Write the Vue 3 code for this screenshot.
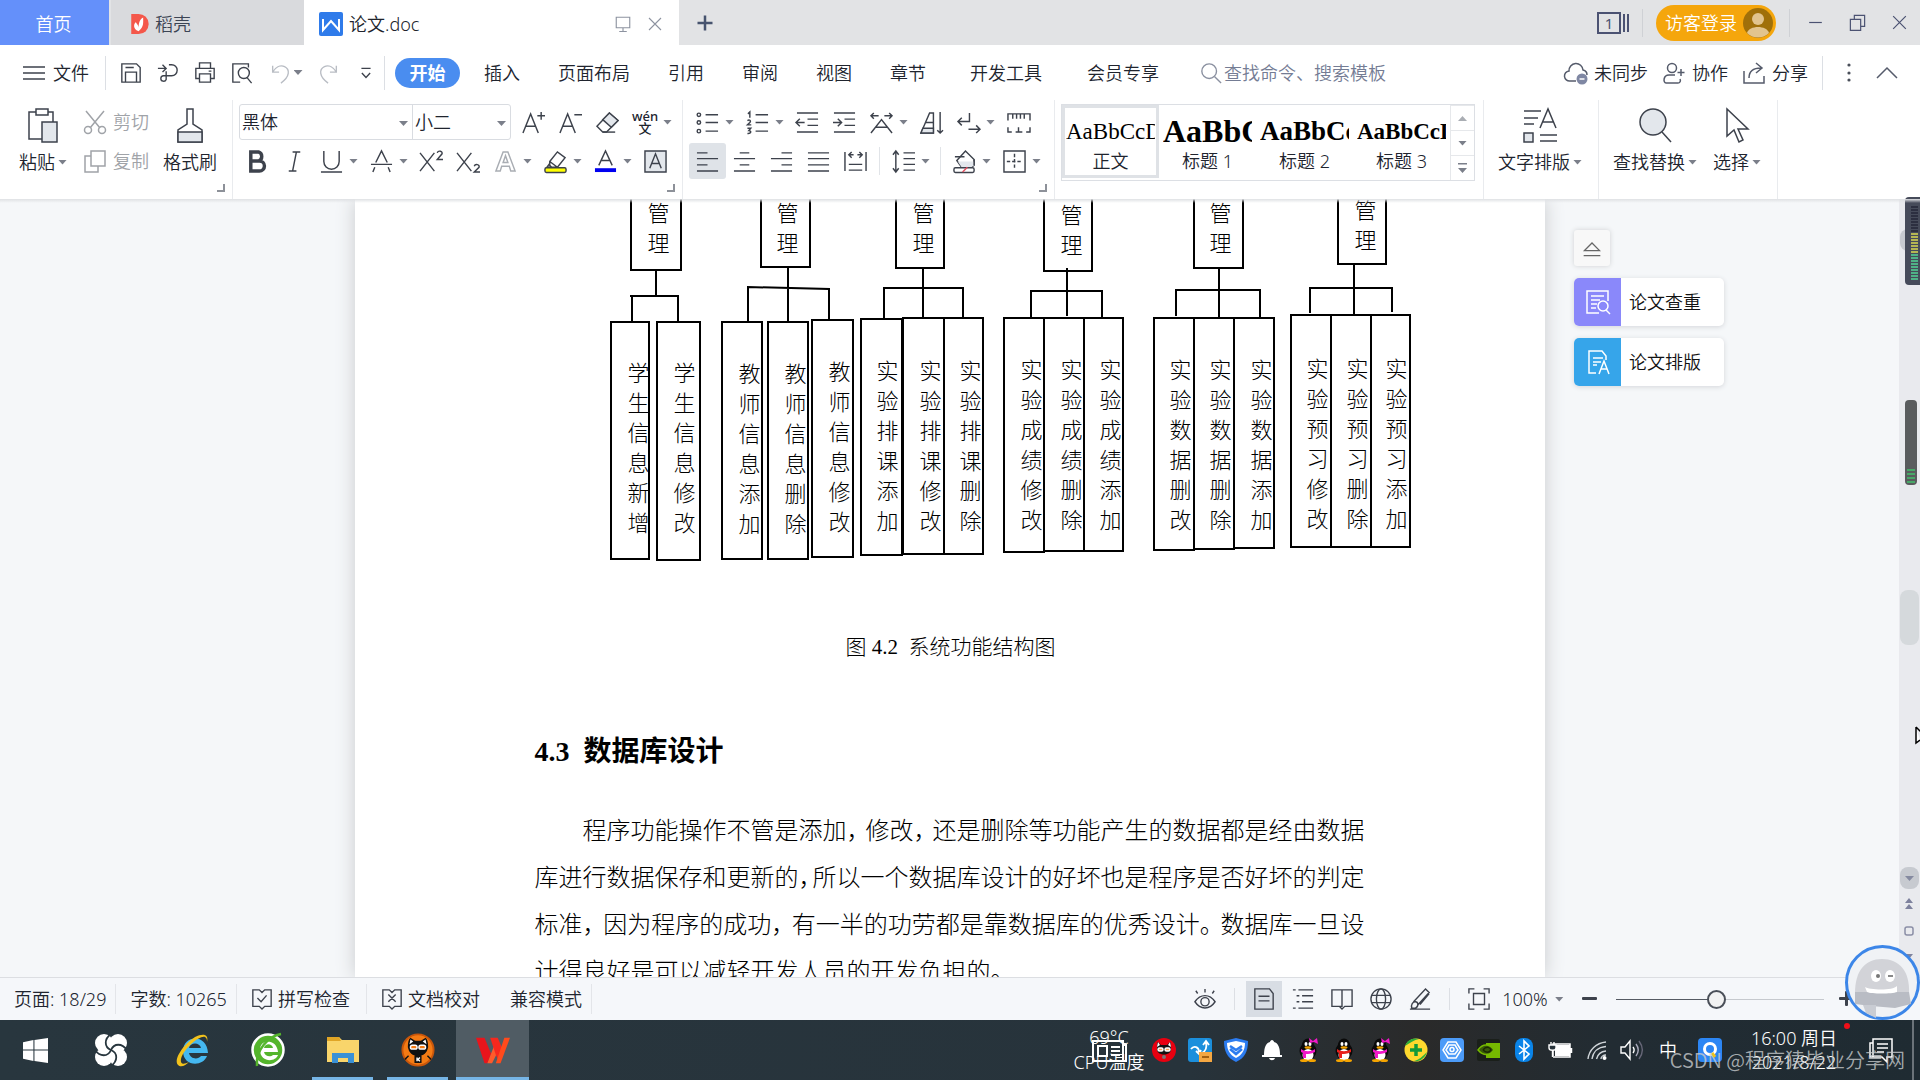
<script setup>
const icons = {
  menu: '<path d="M1 6h22M1 12h22M1 18h22"/>',
  save: '<path d="M2 2h16l4 4v16H2zM6 22V11h12v11M6 6h9"/>',
  exportPdf: '<path d="M1 7h9M6 3l4 4-4 4M13 3h3a6 6 0 0 1 0 12H7a3 3 0 1 0 3 4V10"/>',
  print: '<path d="M6 7V1h12v6M6 18H2V7h20v11h-4M6 13h12v9H6zM16 10h3"/>',
  preview: '<path d="M10 22H2V2h17v4"/><circle cx="14" cy="12" r="6"/><path d="M17.500 17l5 6"/>',
  undo: '<path d="M4 4v7h7M4 11c3-5 8-8 13-6 6 3 6 11-4 18"/>',
  redo: '<path d="M20 4v7h-7M20 11c-3-5-8-8-13-6-6 3-6 11 4 18"/>',
  more: '<path d="M7 7h10M7.500 12l4.500 5 4.500-5"/>',
  search: '<circle cx="10" cy="10" r="8"/><path d="M16 16l7 7"/>',
  cloud: '<path d="M12 20H6a5 5 0 0 1-1-10 7 7 0 0 1 14-1 5 5 0 0 1 4 5"/><circle cx="18" cy="18" r="5.500" fill="#7f87a3" stroke="none"/><path d="M15.500 18h5" stroke="#fff"/>',
  people: '<circle cx="10" cy="7" r="4.500"/><path d="M13 14H7c-6 0-6 8-3 8h12c2 0 3-2 2-4M19 8v7M15.500 11.500h7"/>',
  share: '<path d="M2 10v12h20v-7M7 17c0-7 4-10 12-10M14 2l6 5-6 5"/>',
  up: '<path d="M2 17l10-10 10 10"/>',
  dots: '<g fill="#4a4f5a" stroke="none"><circle cx="12" cy="4" r="1.600"/><circle cx="12" cy="12" r="1.600"/><circle cx="12" cy="19" r="1.600"/></g>',
  present: '<path d="M3 3h18v14H3zM12 17v5M7 22h10"/>',
  close: '<path d="M4 4l16 16M20 4L4 20"/>',
  min: '<path d="M4 12h16"/>',
  restore: '<path d="M3 8h13v14H3zM8 8V3h13v14h-5"/>',
  plus: '<path d="M12 3v18M3 12h18" stroke-width="3"/>',
  paste: '<path d="M11 4H4v27h13M23 4h5v10M11 1h12v6H11z"/><path d="M17 14h15v20H17z" fill="#e3e7ec"/>',
  brush: '<path d="M15 1h6v15l9 6v12H6V22l9-6z"/><path d="M6 24h24v10H6z" fill="#e3e7ec"/>',
  cut: '<path d="M3 1l14 17M21 1L7 18"/><circle cx="5" cy="20" r="3.500"/><circle cx="19" cy="20" r="3.500"/>',
  copy: '<path d="M8 2h14v15H8zM8 7H2v16h13v-6"/>',
  fontUp: '<path d="M1 23L9 3l8 20M4 16h10M20 1v8M16 5h8"/>',
  fontDown: '<path d="M1 23L9 3l8 20M4 16h10M16 4h8"/>',
  eraser: '<path d="M14 2l9 8-12 12H7l-6-6z"/><path d="M14 2l9 8-7 7-9-8z" fill="#e3e7ec"/><path d="M7 22h13"/>',
  bold: '<path d="M5 2h8a5 5 0 0 1 0 9.500H5zM5 11.500h9a5.200 5.200 0 0 1 0 10.500H5z" stroke-width="3.600"/>',
  italic: '<path d="M10 2h8M6 22h8M14 2l-4 20"/>',
  underline: '<path d="M4 1v11a8 8 0 0 0 16 0V1M1 23h22"/>',
  strike: '<path d="M6 13L12 1l6 12M1 15h22M5 18l-2 5M19 18l2 5"/>',
  sup: '<path d="M0 3l15 19M15 3L0 22M18 3c1-3 6-2 5 1l-5 6h6"/>',
  sub: '<path d="M0 3l15 19M15 3L0 22M18 17c1-3 6-2 5 1l-5 5h6"/>',
  outline: '<path d="M2 22L9.500 2h5L22 22h-4.500L16 17H8l-1.500 5zM9.500 13h5L12 6z"/>',
  highlight: '<path d="M6 12l8-10 8 6-8 10H8l-2-2zM6 12l8 6M6 14l-3 4h5"/><rect x="1" y="18.500" width="22" height="5" rx="1.500" fill="#ffff00"/>',
  fontColor: '<path d="M5 16L12 1l7 15M8 11h8"/><path d="M1 21h22" stroke="#0000f0" stroke-width="4"/>',
  charBox: '<path d="M1 1h22v22H1z" fill="#e3e7ec"/><path d="M6 19L12 4l6 15M8 14h8"/>',
  bullets: '<circle cx="3" cy="4" r="1.800"/><circle cx="3" cy="12" r="1.800"/><circle cx="3" cy="21" r="1.800"/><path d="M10 4h13M10 12h13M10 21h13"/>',
  numbers: '<path d="M10 4h13M10 12h13M10 21h13M2 3l2-2v6M1.500 10c2-1.500 4 0 2.500 2l-2.500 2.500h4M1.500 18h3.500l-2 2.500c3 0 2.500 3.500-1.500 3"/>',
  outdent: '<path d="M1 2h22M12 8.500h11M12 15h11M1 22h22M0 12h9M4 8l-4 4 4 4"/>',
  indent: '<path d="M1 2h22M12 8.500h11M12 15h11M1 22h22M0 12h9M5 8l4 4-4 4"/>',
  charScale: '<path d="M1 23L12 9l11 14M6 17h12M1 5h8M4 2L1 5l3 3M15 5h8M20 2l3 3-3 3"/>',
  sort: '<path d="M1 23L10 2h4v21z"/><path d="M3 18h11v5H1z" fill="#e3e7ec"/><path d="M6 12h8M21 1v22M18 20l3 3 3-3"/>',
  wrap: '<path d="M13 2v9H2M5 7l-4 4 4 4M12 19h11M20 15l4 4-4 4"/>',
  ruler: '<path d="M1 10V3h23v7M6 3v5M10 3v5M14 3v5M18 3v5M1 17v5h4M24 17v5h-4M9 22h7M12 17v5"/>',
  left: '<path d="M1 3h11M1 9h22M1 15.500h11M1 22h22"/>',
  center: '<path d="M7 3h10M1 9h22M7 15.500h10M1 22h22"/>',
  right: '<path d="M12 3h11M1 9h22M12 15.500h11M1 22h22"/>',
  justify: '<path d="M1 3h22M1 9h22M1 15.500h22M1 22h22"/>',
  distribute: '<path d="M1 2v20M23 2v20M5 15h14M5 21h14M5 5h5M14 5h5M8 2L5 5l3 3M16 2l3 3-3 3"/>',
  spacing: '<path d="M4 1v22M1 5l3-4 3 4M1 19l3 4 3-4M12 3h12M12 9h12M12 15h12M12 21h12"/>',
  fill: '<path d="M4 11l9-10 9 9v6l-3 2H9z"/><path d="M5 12h17v4l-3 2H9z" fill="#e3e7ec" stroke="none"/><path d="M2 7h10M22 10v6"/><rect x="1" y="18.500" width="21" height="5" rx="1.500" fill="#fff"/><path d="M10 23l5-5" stroke="#e05060"/>',
  borders: '<path d="M1 1h22v22H1z"/><path d="M12 4v16M4 12h16" stroke-dasharray="3.500 2"/>',
  typeset: '<path d="M2 3h17M2 10h14M2 16h10M18 33h17M18 27h17M18 20L26 1l8 19M21 14h10"/><path d="M2 25h9v9H2z" fill="#e3e7ec"/>',
  find: '<circle cx="16" cy="14" r="13" fill="#e3e7ec"/><path d="M25 24l9 10"/>',
  select: '<path d="M8 1v27l7-6 5 12 4-2-5-11h10z"/>',
  spell: '<path d="M2 2h7l3 3 3-3h7v18h-7l-3 3-3-3H2zM7 11l4 4 6-7"/>',
  proof: '<path d="M2 2h7l3 3 3-3h7v18h-7l-3 3-3-3H2zM8 7l8 8M16 7l-8 8"/>',
  eye: '<path d="M1 15c6-9 16-9 22 0-6 9-16 9-22 0z"/><circle cx="12" cy="15" r="4.500"/><path d="M12 1v4M2 3l2 3M22 3l-2 3"/>',
  page: '<path d="M2 1h16l4 5v17H2zM6 9h12M6 14h12"/>',
  outlineView: '<path d="M1 2h3M7 2h16M5 8.500h3M11 8.500h12M5 15h3M11 15h12M1 22h3M7 22h16" />',
  book: '<path d="M1 2h11v18H1zM12 2h11v18h-8l-3 3-3-3"/>',
  globe: '<circle cx="12" cy="12" r="11"/><ellipse cx="12" cy="12" rx="5" ry="11"/><path d="M2 8h20M2 16h20"/>',
  pen: '<path d="M1 23h22M5 15L18 1l4 4-13 14M3 22c-1-4 1-7 4-7s4 5 0 7zM12 18l10-12"/>',
  fit: '<path d="M1 6V1h6M17 1h6v5M23 17v6h-6M7 23H1v-6M6 6h12v12H6z"/>',
  checkDup: '<path d="M13 23H1V1h21v10M5 6h13M5 10h9M5 14h6M5 18h5"/><circle cx="17" cy="16" r="5"/><path d="M20 20l4 4"/>',
  layout: '<path d="M10 23H3V1h13l4 5v4M7 8h10M7 12h8M7 15h4M13 24l5-13 5 13M15 19h6"/>',
  eject: '<path d="M3 15l9-9 9 9zM2 21h20"/>',
}

const tabs = ['插入', '页面布局', '引用', '审阅', '视图', '章节']
const wideTabs = ['开发工具', '会员专享']

const fontRow1 = [['fontUp', 0], ['fontDown', 0], ['eraser', 0]]
const fontRow2 = [['bold', 0], ['italic', 0], ['underline', 1], ['strike', 1], ['sup', 0], ['sub', 0], ['outline', 1], ['highlight', 1], ['fontColor', 1], ['charBox', 0]]
const paraRow1 = [['bullets', 1], ['numbers', 1], ['outdent', 0], ['indent', 0], ['charScale', 1], ['sort', 0], ['wrap', 1], ['ruler', 0]]
const paraRow2 = [['left', 0], ['center', 0], ['right', 0], ['justify', 0], ['distribute', 0], ['sep', 0], ['spacing', 1], ['sep', 0], ['fill', 1], ['borders', 1]]

const styles = [
  { sample: 'AaBbCcDd', label: '正文', cls: 'body' },
  { sample: 'AaBbCc', label: '标题 1', cls: 'h1' },
  { sample: 'AaBbCc', label: '标题 2', cls: 'h2' },
  { sample: 'AaBbCcDd', label: '标题 3', cls: 'h3' },
]

// Diagram nodes: text, left, top, right, bottom, text centre x, first character centre y
const nodes = [
  ['管理', 275, -40, 327, 72, 303, 15],
  ['管理', 405, -40, 456, 69, 432, 15],
  ['管理', 540, -40, 590, 70, 568, 15],
  ['管理', 688, -40, 738, 73, 716, 17],
  ['管理', 838, -40, 889, 70, 865, 15],
  ['管理', 982, -40, 1032, 66, 1010, 12],
  ['学生信息新增', 255, 122, 295, 361, 283, 175],
  ['学生信息修改', 301, 122, 346, 362, 329, 175],
  ['教师信息添加', 366, 122, 408, 361, 394, 176],
  ['教师信息删除', 412, 122, 454, 361, 440, 176],
  ['教师信息修改', 456, 120, 499, 359, 484, 174],
  ['实验排课添加', 505, 119, 548, 357, 532, 173],
  ['实验排课修改', 547, 118, 590, 356, 575, 173],
  ['实验排课删除', 588, 118, 629, 356, 615, 173],
  ['实验成绩修改', 648, 118, 690, 354, 676, 172],
  ['实验成绩删除', 688, 118, 730, 353, 716, 172],
  ['实验成绩添加', 728, 118, 769, 353, 755, 172],
  ['实验数据删改', 798, 118, 840, 352, 825, 172],
  ['实验数据删除', 838, 118, 880, 351, 865, 172],
  ['实验数据添加', 878, 118, 920, 350, 906, 172],
  ['实验预习修改', 935, 115, 977, 349, 962, 171],
  ['实验预习删除', 975, 115, 1017, 349, 1002, 171],
  ['实验预习添加', 1015, 115, 1056, 349, 1041, 171],
].map(([text, l, t, r, b, cx, cy]) => ({
  text,
  style: {
    left: l + 'px',
    top: t + 'px',
    width: r - l + 'px',
    height: b - t + 'px',
    paddingLeft: cx - 12 - l + 'px',
    paddingTop: cy - 17 - t + 'px',
  },
}))

const links = [
  'M301 72V97M275 97H324M277 97V122M323 97V122',
  'M433 69V122M393 122V88L474 90V120',
  'M568 70V118M529 119V89H608V118',
  'M712 69V117M676 118V92H747V118',
  'M864 70V118M821 117V91H905V118',
  'M999 66V115M955 114V89H1037V113',
]

const paragraph = [
  ['程序功能操作不管是添加，', '修改，', '还是删除等功能产生的数据都是经由数据'],
  ['库进行数据保存和更新的，', '所以一个数据库设计的好坏也是程序是否好坏的判定'],
  ['标准，', '因为程序的成功，', '有一半的功劳都是靠数据库的优秀设计。', '数据库一旦设'],
  ['计得良好是可以减轻开发人员的开发负担的。'],
]

const cat = '<path d="M5 12c0-3 0-8 1-8l3 3h6l3-3c1 0 1 5 1 8-1 6-13 6-14 0z" fill="#111"/><path d="M6 4l-1 5 3-2zM18 4l1 5-3-2z" fill="#fff"/><rect x="6" y="10" width="5" height="3" rx="1.500" fill="#f7a35c" stroke="#fff"/><rect x="13" y="10" width="5" height="3" rx="1.500" fill="#f7a35c" stroke="#fff"/>'
const penguin = (scarf, bow) =>
  '<ellipse cx="12" cy="13" rx="8.500" ry="9" fill="#0a0a0a"/><ellipse cx="12" cy="7" rx="6" ry="6.500" fill="#0a0a0a"/><ellipse cx="12" cy="17" rx="5.500" ry="6" fill="#fff"/><ellipse cx="10" cy="6" rx="1.500" ry="2" fill="#fff"/><ellipse cx="14" cy="6" rx="1.500" ry="2" fill="#fff"/><ellipse cx="12" cy="9.500" rx="3.500" ry="1.300" fill="#f5a400"/>' +
  `<path d="M5 11c4 3 10 3 14 0v3c-4 2-7 2-9 2v4H7v-5l-2-1z" fill="${scarf}"/><ellipse cx="8" cy="22.500" rx="4" ry="1.500" fill="#f5a400"/><ellipse cx="16" cy="22.500" rx="4" ry="1.500" fill="#f5a400"/>` +
  (bow ? `<path d="M13 0l4 3 4-3 1 6-4-2-4 1z" fill="${scarf}"/>` : '')

const tray = [
  '<circle cx="12" cy="12" r="12" fill="#e80010"/>' + cat + '<circle cx="12" cy="19" r="2" fill="#777"/>',
  '<rect width="24" height="24" rx="3" fill="#1b8fdc"/><path d="M3 11c3-4 8-2 8 3M8 13l3 3 2-4M14 15c4-2 5-6 4-11M15 7l3-4 3 4" fill="none" stroke="#fff" stroke-width="1.800"/><rect x="11" y="14" width="13" height="10" fill="#f4a742"/><path d="M14 19h7" stroke="#8a4a00" stroke-width="1.500"/>',
  '<path d="M12 0l12 3c0 10-3 17-12 21C3 20 0 13 0 3z" fill="#2c7cf0"/><path d="M12 3l9 2c0 7-3 12-9 15C6 17 3 12 3 5z" fill="#fff"/><path d="M6 8l6 4 6-4M6 11l6 5 6-5" fill="none" stroke="#2c7cf0" stroke-width="2.500"/>',
  '<path d="M12 2c1 0 2 1 2 2 4 1 6 5 6 13h2v2H2v-2h2C4 9 6 5 10 4c0-1 1-2 2-2zM9 20h6c-1 3-5 3-6 0z" fill="#fff"/>',
  penguin('#f018c8', true),
  penguin('#e8201c', false),
  penguin('#f018c8', true),
  '<circle cx="12" cy="12" r="11.500" fill="#ffd92e"/><path d="M1 8C3 2 9-1 15 1c-5 1-9 4-14 7zM23 14c-2 6-7 10-13 9 5-1 9-5 13-9z" fill="#2dae3a"/><path d="M12 6v12M6 12h12" stroke="#14993a" stroke-width="3.500"/>',
  '<rect width="24" height="24" rx="4" fill="#4c9bf8"/><path d="M8 4h8l5 8-5 8H8l-5-8z" fill="none" stroke="#fff" stroke-width="1.500"/><path d="M9 7h6l3 5-3 4H9l-3-4z" fill="none" stroke="#fff"/><circle cx="12" cy="11.500" r="2" fill="none" stroke="#fff" stroke-width="1.500"/>',
  '<rect x="1" y="1" width="23" height="22" rx="2" fill="#1a1f1a"/><path d="M10 5h14v15H10z" fill="#76b900"/><path d="M2 12c5-7 12-6 16 0-4 6-11 6-16 0z" fill="#3a5a0a" stroke="#76b900" stroke-width="1.500"/><path d="M7 12c3-4 7-3 8 0-2 3-5 3-8 0" fill="none" stroke="#1a2a00" stroke-width="1.500"/>',
  '<rect x="3" width="18" height="24" rx="8" fill="#0a84e8"/><path d="M7 8l10 8-5 5V3l5 5-10 8" fill="none" stroke="#fff" stroke-width="1.600"/>',
  '<rect x="7" y="7" width="15" height="11" fill="#fff"/><path d="M5 18V6h17v13H5M23.500 10v5" fill="none" stroke="#fff"/><path d="M1 7h7v3c0 3-7 3-7 0zM3 4v3M6 4v3M4.500 12v7" fill="#27323a" stroke="#fff" stroke-width="1.400"/>',
  '<g fill="none" stroke="#cfd4d8" stroke-width="1.400"><path d="M4 21C5 12 12 5 22 4"/><path d="M8 21c1-7 6-12 14-12.500"/><path d="M12.500 21c1-4 4-7.500 9.500-8"/><path d="M17 21c0-2 2-4 5-4"/></g><circle cx="20.500" cy="20" r="2" fill="#fff"/>',
  '<g fill="none" stroke="#fff" stroke-width="1.400"><path d="M1 9h4l5-6v18l-5-6H1z"/><path d="M13 9c1.500 2 1.500 4 0 6"/><path d="M16 6c3 4 3 8 0 12" stroke="#aab"/><path d="M19 3c4.500 6 4.500 12 0 18" stroke="#667"/></g>',
]
const meter = Array.from({ length: 25 }, (_, i) => (i < 9 ? 'off' : i < 16 ? 'warm' : 'cool'))
</script>

<template>
  <div class="app">
    <header class="titlebar">
      <button class="home">首页</button>
      <button class="tab docer">
        <svg class="logo" viewBox="0 0 20 24"><path d="M1 1h8a11 11 0 0 1 0 22H1z" fill="#f4574a" /><path d="M9 20c-7-3-5-9-3-10 1 2 3 3 3 6 0-4 1-9 5-11 0 6 1 10-5 15z" fill="#fff" /></svg>
        稻壳
      </button>
      <div class="tab active">
        <svg class="logo big" viewBox="0 0 24 24"><rect width="24" height="24" rx="2" fill="#2f7bea" /><path d="M4 7v11l8-9 8 9V7" fill="none" stroke="#fff" stroke-width="2" /></svg>
        <span>论文.doc</span>
        <button class="ib pale push" aria-label="投影"><svg viewBox="0 0 24 24" v-html="icons.present" /></button>
        <button class="ib pale" aria-label="关闭标签"><svg viewBox="0 0 24 24" v-html="icons.close" /></button>
      </div>
      <button class="ib add" aria-label="新建"><svg viewBox="0 0 24 24" v-html="icons.plus" /></button>
      <div class="window">
        <button class="count" aria-label="窗口"><b>1</b><i></i><i></i></button>
        <span class="rule"></span>
        <button class="login">访客登录
          <svg viewBox="0 0 30 30"><circle cx="15" cy="15" r="15" fill="#a0700a" /><circle cx="15" cy="11" r="6" fill="#e2c48e" /><path d="M4 25c2-8 20-8 22 0-6 6-16 6-22 0z" fill="#e2c48e" /></svg>
        </button>
        <span class="rule"></span>
        <button class="ib" aria-label="最小化"><svg viewBox="0 0 24 24" v-html="icons.min" /></button>
        <button class="ib" aria-label="还原"><svg viewBox="0 0 24 24" v-html="icons.restore" /></button>
        <button class="ib" aria-label="关闭"><svg viewBox="0 0 24 24" v-html="icons.close" /></button>
      </div>
    </header>

    <nav class="menubar">
      <button class="file"><svg viewBox="0 0 24 24" v-html="icons.menu" />文件</button>
      <span class="rule"></span>
      <div class="quick">
        <button v-for="n in ['save', 'exportPdf', 'print', 'preview']" :key="n" class="ib" :aria-label="n"><svg viewBox="0 0 24 24" v-html="icons[n]" /></button>
        <button class="ib faded drop" aria-label="撤销"><svg viewBox="0 0 24 24" v-html="icons.undo" /><i class="caret"></i></button>
        <button class="ib faded" aria-label="恢复"><svg viewBox="0 0 24 24" v-html="icons.redo" /></button>
        <button class="ib" aria-label="更多"><svg viewBox="0 0 24 24" v-html="icons.more" /></button>
      </div>
      <span class="rule"></span>
      <button class="start">开始</button>
      <div class="tabs">
        <button v-for="t in tabs" :key="t">{{ t }}</button>
        <button v-for="t in wideTabs" :key="t" class="wide">{{ t }}</button>
      </div>
      <label class="search"><svg viewBox="0 0 24 24" v-html="icons.search" /><input type="text" placeholder="查找命令、搜索模板" aria-label="查找命令、搜索模板" /></label>
      <div class="account">
        <button><svg viewBox="0 0 24 24" v-html="icons.cloud" />未同步</button>
        <button><svg viewBox="0 0 24 24" v-html="icons.people" />协作</button>
        <button><svg viewBox="0 0 24 24" v-html="icons.share" />分享</button>
        <span class="rule"></span>
        <button aria-label="更多"><svg viewBox="0 0 24 24" v-html="icons.dots" /></button>
        <button aria-label="折叠"><svg viewBox="0 0 24 24" v-html="icons.up" /></button>
      </div>
    </nav>

    <section class="ribbon">
      <div class="group clip">
        <button class="large"><svg viewBox="0 0 36 36" v-html="icons.paste" /><span>粘贴<i class="caret"></i></span></button>
        <div class="pair">
          <button><svg viewBox="0 0 24 24" v-html="icons.cut" />剪切</button>
          <button><svg viewBox="0 0 24 24" v-html="icons.copy" />复制</button>
        </div>
        <button class="large"><svg viewBox="0 0 36 36" v-html="icons.brush" /><span>格式刷</span></button>
        <i class="corner"></i>
      </div>
      <div class="group font">
        <div class="row">
          <div class="selects">
            <label class="pick family"><select aria-label="字体"><option>黑体</option></select><i class="caret"></i></label>
            <label class="pick size"><select aria-label="字号"><option>小二</option></select><i class="caret"></i></label>
          </div>
          <button v-for="[n] in fontRow1" :key="n" class="tool" :aria-label="n"><svg viewBox="0 0 24 24" v-html="icons[n]" /></button>
          <button class="tool drop"><span class="pinyin"><span>wén</span><span>文</span></span><i class="caret"></i></button>
        </div>
        <div class="row">
          <button v-for="[n, d] in fontRow2" :key="n" class="tool" :class="{ drop: d, faint: n === 'outline' }" :aria-label="n"><svg viewBox="0 0 24 24" v-html="icons[n]" /><i v-if="d" class="caret"></i></button>
        </div>
        <i class="corner"></i>
      </div>
      <div class="group para">
        <div class="row">
          <button v-for="[n, d] in paraRow1" :key="n" class="tool" :class="{ drop: d }" :aria-label="n"><svg viewBox="0 0 24 24" v-html="icons[n]" /><i v-if="d" class="caret"></i></button>
        </div>
        <div class="row">
          <template v-for="([n, d], i) in paraRow2" :key="i">
            <span v-if="n === 'sep'" class="sep"></span>
            <button v-else class="tool" :class="{ drop: d, on: n === 'left' }" :aria-label="n"><svg viewBox="0 0 24 24" v-html="icons[n]" /><i v-if="d" class="caret"></i></button>
          </template>
        </div>
        <i class="corner"></i>
      </div>
      <div class="group gallery-group">
        <div class="gallery">
          <button v-for="s in styles" :key="s.label" class="style" :class="s.cls"><span class="sample">{{ s.sample }}</span><span>{{ s.label }}</span></button>
          <div class="scroller">
            <button aria-label="上一行"><i class="caret flip"></i></button>
            <button aria-label="下一行"><i class="caret"></i></button>
            <button aria-label="展开"><i class="caret bar"></i></button>
          </div>
        </div>
      </div>
      <div class="group actions">
        <button class="large"><svg viewBox="0 0 36 36" v-html="icons.typeset" /><span>文字排版<i class="caret"></i></span></button>
      </div>
      <div class="group actions">
        <button class="large"><svg viewBox="0 0 36 36" v-html="icons.find" /><span>查找替换<i class="caret"></i></span></button>
        <button class="large"><svg viewBox="0 0 36 36" v-html="icons.select" /><span>选择<i class="caret"></i></span></button>
      </div>
    </section>

    <main class="workspace">
      <div class="canvas">
        <article class="page">
          <figure>
            <div class="diagram">
              <svg class="links" viewBox="0 0 1190 400"><path v-for="d in links" :key="d" :d="d" /></svg>
              <div v-for="(n, i) in nodes" :key="i" class="node" :style="n.style"><span>{{ n.text }}</span></div>
            </div>
            <figcaption>图 4.2&nbsp; 系统功能结构图</figcaption>
          </figure>
          <h2>4.3&nbsp; 数据库设计</h2>
          <p><span v-for="(line, i) in paragraph" :key="i" class="line"><span v-for="part in line" :key="part">{{ part }}</span></span></p>
        </article>
      </div>
      <aside class="side">
        <button class="fold" aria-label="收起"><svg viewBox="0 0 24 24" v-html="icons.eject" /></button>
        <button class="card"><span class="badge violet"><svg viewBox="0 0 24 24" v-html="icons.checkDup" /></span>论文查重</button>
        <button class="card"><span class="badge sky"><svg viewBox="0 0 24 24" v-html="icons.layout" /></span>论文排版</button>
      </aside>
      <div class="scrollbar">
        <i class="cap top"></i>
        <i class="thumb"></i>
        <i class="cap down"></i>
        <svg class="browse" viewBox="0 0 20 66"><path d="M6 10l4-5 4 5zM6 16l4-5 4 5zM6 61h8l-4 5z" fill="#7e829e" /><rect x="6" y="34" width="8" height="8" rx="2" fill="none" stroke="#8a8ea6" stroke-width="1.500" /></svg>
      </div>
      <div class="meter small"><i v-for="i in 4" :key="i" class="green"></i></div>
      <svg class="pointer" viewBox="0 0 5 18"><path d="M1 1v16l4-3M1 1l5 5" fill="#fff" stroke="#000" stroke-width="1.500" /></svg>
    </main>
    <div class="meter"><i v-for="(m, i) in meter" :key="i" :class="m"></i></div>

    <footer class="status">
      <span class="cell">页面: 18/29</span>
      <span class="cell">字数: 10265</span>
      <button class="cell"><svg viewBox="0 0 24 24" v-html="icons.spell" />拼写检查</button>
      <button class="cell noline"><svg viewBox="0 0 24 24" v-html="icons.proof" />文档校对</button>
      <span class="cell mode">兼容模式</span>
      <div class="views">
        <button aria-label="护眼"><svg viewBox="0 0 24 24" v-html="icons.eye" /></button>
        <span class="rule"></span>
        <button v-for="n in ['page', 'outlineView', 'book', 'globe', 'pen']" :key="n" :class="{ on: n === 'page' }" :aria-label="n"><svg viewBox="0 0 24 24" v-html="icons[n]" /></button>
        <span class="rule"></span>
        <button aria-label="适应窗口"><svg viewBox="0 0 24 24" v-html="icons.fit" /></button>
        <button class="percent">100%<i class="caret"></i></button>
        <button class="minus" aria-label="缩小"></button>
        <input type="range" min="0" max="100" value="48" aria-label="缩放" />
        <button class="minus plus" aria-label="放大"></button>
      </div>
      <svg class="mascot" viewBox="0 0 75 75">
        <circle cx="37.500" cy="37.500" r="36" fill="#f0f2f5" stroke="#3c86e8" stroke-width="3" />
        <path d="M10 48C10 26 20 14 37 14s28 12 27 34z" fill="#d2d3d8" />
        <path d="M10 47h54l2 12-16 4-24-2-16-2z" fill="#b9bcc4" /><path d="M18 60h13v13l-10-5z" fill="#c9ccd3" />
        <ellipse cx="31" cy="31" rx="5" ry="6" fill="#fff" /><ellipse cx="45" cy="31" rx="5" ry="6" fill="#fff" /><circle cx="33" cy="31" r="2" fill="#777" /><path d="M43 31h5" stroke="#888" stroke-width="2" />
        <path d="M20 42c4 3 28 4 32-1v6c-5 2-26 2-30 0z" fill="#fff" />
      </svg>
    </footer>

    <footer class="taskbar">
      <button class="app-btn win" aria-label="开始菜单"><svg viewBox="0 0 24 24"><path d="M0 4l10-2v9H0zM11 2l13-2v11H11zM0 12h10v10L0 20zM11 12h13v12l-13-2z" fill="#fff" /></svg></button>
      <button class="app-btn" aria-label="花瓣"><svg viewBox="0 0 34 34"><g fill="#fff"><circle cx="10" cy="10" r="9" /><circle cx="24" cy="10" r="9" /><circle cx="24" cy="24" r="9" /><circle cx="10" cy="24" r="9" /><path d="M8 8h18v18H8z" /></g><g fill="none" stroke="#28363e" stroke-width="1.800"><path d="M17 17C10 14 10 6 17 1" /><path d="M17 17C20 10 28 10 33 17" /><path d="M17 17C24 20 24 28 17 33" /><path d="M17 17C14 24 6 24 1 17" /></g></svg></button>
      <button class="app-btn ie" aria-label="浏览器"><svg viewBox="0 0 34 34"><path d="M32 20H13c1 6 9 7 12 3h6c-4 11-24 11-24-5S31 0 32 20zM13 15h12c-1-6-11-6-12 0z" fill="#45b8f0" /><path d="M31 9c2-8-4-9-12-5C8 11-3 26 2 32c3 3 8 0 11-3-6 3-9 2-8-3C8 15 24 2 29 4c2 1 2 3 2 5z" fill="#f2c21c" /></svg></button>
      <button class="app-btn" aria-label="安全浏览器"><svg viewBox="0 0 34 34"><circle cx="17" cy="17" r="15.500" fill="#54b52c" stroke="#fff" stroke-width="2.500" /><path d="M27 19H13c1 5 7 5 9 3h5c-3 8-18 7-18-5S26 6 27 19zM13 15h9c-1-5-8-5-9 0z" fill="#fff" /><path d="M30 1c-12 2-26 16-24 32" fill="none" stroke="#54b52c" stroke-width="2.500" /></svg></button>
      <button class="app-btn open" aria-label="文件资源管理器"><svg viewBox="0 0 34 34"><path d="M1 4h12l3 3h17v22H1z" fill="#f9d56b" /><path d="M1 4h12l2 4H1z" fill="#e0a526" /><path d="M6 30V20h22v10h-6v-5H12v5z" fill="#3a91d6" /></svg></button>
      <button class="app-btn open" aria-label="工具箱"><svg viewBox="0 0 36 36"><circle cx="18" cy="18" r="16.500" fill="#f47b14" stroke="#c9560a" stroke-width="2" /><path d="M8 15C8 10 9 7 10 6l5 3h6l5-3c1 1 2 4 2 9-1 6-5 8-7 8v8h-6v-8c-2 0-6-2-7-8zM8 24l-4 4M28 24l4 4" fill="#111" stroke="#111" /><path d="M10 7l-1 5 4-3zM26 7l1 5-4-3z" fill="#fff" /><rect x="10" y="13" width="7" height="4" rx="2" fill="#f47b14" stroke="#fff" /><rect x="19" y="13" width="7" height="4" rx="2" fill="#f47b14" stroke="#fff" /><path d="M17 26v4M20 26l-2 2 2 2" stroke="#fff" fill="none" /></svg></button>
      <button class="app-btn current" aria-label="WPS"><svg viewBox="0 0 36 34"><path d="M0 4h9l7 17-4 10H9z" fill="#e8151c" /><path d="M12 31l7-18h7L17 31z" fill="#ff5a2a" /><path d="M15 4h8l6 14-4 13-4-9z" fill="#f5281e" /><path d="M21 31L30 4h6L26 31z" fill="#ff4a1c" /></svg></button>
      <div class="temp"><span>69°C</span><span>CPU温度</span><svg viewBox="0 0 36 24"><path d="M2 2h30v20H2zM32 6h3v16H6M7 7h9v10H7zM20 8h9M20 12h9M20 16h9" fill="none" stroke="#fff" stroke-width="2" /></svg></div>
      <div class="tray">
        <svg v-for="(t, i) in tray" :key="i" viewBox="0 0 24 24" v-html="t" />
        <span class="ime">中</span>
      </div>
      <svg class="qbadge" viewBox="0 0 24 24"><rect width="24" height="24" rx="4" fill="#2c86f4" /><circle cx="12" cy="11" r="5.500" fill="none" stroke="#fff" stroke-width="3" /><path d="M14 15l3 4" stroke="#f2c21c" stroke-width="3" /></svg>
      <div class="clock"><span>16:00 周日</span><span>2021/8/22</span></div>
      <svg class="notes" viewBox="0 0 24 24"><path d="M4 1h19v18h-5v5l-5-5H4zM4 5H1v14h5M8 6h11M8 10h11M8 14h7" fill="none" stroke="#fff" stroke-width="1.500" /></svg>
      <i class="edge"></i>
      <i class="dot"></i>
      <span class="credit">CSDN @程序猿毕业分享网</span>
    </footer>
  </div>
</template>

<style>
body { margin: 0; overflow: hidden; }
</style>

<style scoped>
.app { position: relative; display: flex; flex-direction: column; height: 100vh; min-width: 1280px; font: 350 18px/24px "Noto Sans", "Noto Sans CJK SC", sans-serif; color: #20242e; background: #fff; overflow: hidden; }
.app * { box-sizing: border-box; }
button { font: inherit; color: inherit; background: none; border: 0; padding: 0; display: flex; align-items: center; white-space: nowrap; }
svg { width: 24px; height: 24px; flex: none; fill: none; stroke: #3d424c; stroke-width: 1.5; overflow: visible; }
.logo, .taskbar svg, .mascot, .login svg { stroke: none; }
.rule { width: 1px; height: 34px; background: #dcdfe4; flex: none; }
.caret { display: block; flex: none; width: 9px; height: 5px; background: #7b7f8a; clip-path: polygon(0 0, 100% 0, 50% 100%); }

.titlebar { display: flex; align-items: center; height: 45px; flex: none; background: #e2e3e5; }
.home { width: 109px; height: 45px; justify-content: center; background: #6490fa; color: #fff; padding: 2px 2px 0 0; }
.tab { display: flex; align-items: center; height: 45px; }
.docer { width: 193px; margin-left: 2px; padding: 2px 0 0 19px; gap: 6px; background: #d9dadd; color: #3c4454; }
.logo { width: 19px; height: 22px; }
.logo.big { width: 24px; height: 24px; }
.active { width: 375px; padding: 2px 12px 0 15px; gap: 6px; background: #fff; color: #20242c; }
.push { margin-left: auto; margin-right: 2px; }
.ib svg { width: 20px; height: 20px; }
.active .ib svg { width: 18px; height: 18px; }
.ib { width: 24px; height: 24px; justify-content: center; }
.pale svg { stroke: #8d93a0; }
.add { margin-left: 14px; }
.add svg { stroke: #46536e; }
.window { margin-left: auto; display: flex; align-items: center; gap: 13px; padding-right: 9px; }
.window .ib + .ib { margin-left: 5px; }
.window svg { stroke: #4b5272; }
.window .login svg { stroke: none; }
.window .ib svg { width: 19px; height: 19px; }
.window .rule { background: #cfd1d5; height: 28px; }
.count { gap: 2px; height: 22px; }
.count b { font-weight: 400; font-size: 15px; line-height: 18px; width: 24px; height: 22px; border: 2px solid #4b5272; text-align: center; color: #4b5272; }
.count i { width: 2px; height: 18px; background: #4b5272; }
.login { width: 120px; height: 36px; border-radius: 18px; background: #f5a60c; color: #fff; padding-left: 9px; gap: 6px; }
.login svg { width: 30px; height: 30px; }

.menubar { display: flex; align-items: center; height: 55px; flex: none; padding-left: 22px; }
.file { gap: 7px; margin-right: 16px; }
.quick { display: flex; align-items: center; gap: 13px; margin: 0 6px 0 13px; }
.quick .ib svg { width: 22px; height: 22px; }
.quick .drop { width: 37px; gap: 3px; }
.faded svg { stroke: #b9bdc4; }
.start { width: 65px; height: 30px; margin-left: 10px; justify-content: center; border-radius: 15px; background: #4a8df0; color: #fff; font-weight: 700; }
.tabs { display: flex; margin-left: 5px; }
.tabs button { padding: 0 19px; }
.tabs .wide { padding: 0 20px 0 25px; }
.search { display: flex; align-items: center; margin-left: 21px; gap: 2px; }
.search svg { stroke: #8a90a0; width: 22px; height: 22px; }
.search input { width: 190px; border: 0; padding: 0; font: inherit; background: none; outline: 0; }
.search input::placeholder { color: #747c94; opacity: 1; }
.account { margin-left: auto; display: flex; align-items: center; gap: 14px; padding-right: 21px; }
.account button { gap: 6px; }
.account svg { width: 24px; height: 24px; stroke: #555b6b; }

.ribbon { display: flex; height: 99px; flex: none; }
.group { position: relative; border-right: 1px solid #e9ebee; flex: none; padding-top: 4px; }
.row { display: flex; height: 36px; align-items: center; margin-bottom: 3px; }
.corner { position: absolute; right: 7px; bottom: 7px; width: 8px; height: 8px; border: solid #8d9199; border-width: 0 2px 2px 0; }
.large { flex-direction: column; padding-top: 4px; height: 72px; }
.large svg { width: 36px; height: 36px; margin-bottom: 6px; }
.large span { display: flex; align-items: center; gap: 3px; line-height: 24px; }
.clip { width: 233px; display: flex; padding-left: 19px; }
.pair { margin: 0 14px 0 16px; color: #a0a3a8; }
.pair button { height: 36px; margin-bottom: 3px; gap: 6px; }
.pair svg { stroke: #a0a3a8; }
.font { width: 450px; padding-left: 6px; }
.para { width: 372px; padding-left: 6px; }
.selects { display: flex; width: 272px; height: 36px; margin-right: 4px; border: 1px solid #d9dce1; border-radius: 3px; }
.pick { position: relative; display: flex; }
.pick select { width: 100%; appearance: none; border: 0; background: none; font: inherit; color: inherit; padding: 0 2px; outline: 0; }
.pick .caret { position: absolute; right: 4px; top: 16px; pointer-events: none; }
.family { width: 173px; border-right: 1px solid #d9dce1; }
.size { flex: 1; }
.tool { width: 37px; height: 36px; justify-content: center; flex: none; border-radius: 3px; }
.tool svg { width: 23px; height: 23px; }
.tool.drop { width: 50px; padding-left: 7px; justify-content: flex-start; gap: 6px; }
.tool.on { background: #dfe3e8; }
.faint svg { stroke: #a9adb3; }
.sep { width: 1px; height: 28px; margin: 0 5px; background: #e1e4e8; }
.pinyin { display: flex; flex-direction: column; width: 24px; font-size: 13px; font-weight: 500; line-height: 12px; align-items: center; }
.gallery-group { width: 429px; padding-left: 6px; }
.gallery { display: flex; width: 414px; height: 77px; border: 1px solid #dcdfe4; }
.style { width: 97px; height: 75px; flex-direction: column; padding: 9px 4px 0; overflow: hidden; line-height: 24px; }
.style.body { border: 3px solid #dfe2e6; padding: 6px 1px 0; height: 73px; }
.sample { width: 100%; height: 35px; line-height: 35px; overflow: hidden; text-align: left; font-family: "Liberation Serif", serif; color: #000; font-size: 23px; font-weight: 400; }
.h1 .sample { font-size: 32px; font-weight: 700; }
.h2 .sample { font-size: 27px; font-weight: 700; }
.h3 .sample { font-size: 23px; font-weight: 700; }
.scroller { flex: 1; border-left: 1px solid #e6e8eb; display: flex; flex-direction: column; }
.scroller button { flex: 1; justify-content: center; border-top: 1px solid #e6e8eb; }
.flip { transform: rotate(180deg); background: #a9adb3; }
.bar { height: 10px; clip-path: polygon(0 0, 100% 0, 100% 15%, 0 15%, 0 50%, 100% 50%, 50% 100%, 0 50%); }
.actions { display: flex; gap: 16px; padding-left: 14px; padding-right: 16px; }

.workspace { position: relative; display: flex; flex: 1; min-height: 0; overflow: hidden; background: #f5f7f9; }
.workspace::before { content: ""; position: absolute; left: 0; right: 0; top: 0; height: 4px; background: linear-gradient(#dfe1e4, #dfe1e400); z-index: 1; }
.canvas { flex: 1; display: flex; justify-content: center; }
.page { width: 1190px; background: #fff; box-shadow: 0 0 18px #c9cbce; color: #000; font-family: "Liberation Serif", "Noto Sans CJK SC", serif; }
figure { margin: 0; }
.diagram { position: relative; height: 400px; }
.links { position: absolute; left: 0; top: 0; width: 1190px; height: 400px; stroke: #000; stroke-width: 2; }
.node { position: absolute; border: 2px solid #000; display: flex; align-items: flex-start; }
.node span { width: 22px; flex: none; font-size: 22px; line-height: 30px; word-break: break-all; font-weight: 300; }
figcaption { margin-top: 33px; padding-left: 2px; text-align: center; font-size: 21px; line-height: 30px; font-weight: 300; }
h2 { margin: 70px 180px 0; font-size: 28px; line-height: 40px; }
p { margin: 36px 180px 0; font-size: 24px; line-height: 47px; font-weight: 300; font-feature-settings: "halt"; }
.line { display: flex; justify-content: space-between; white-space: nowrap; }
.line:first-child { padding-left: 48px; }
.line:last-child { justify-content: flex-start; }
.side { position: absolute; right: 196px; top: 31px; width: 150px; display: flex; flex-direction: column; gap: 12px; }
.fold { width: 36px; height: 36px; justify-content: center; border-radius: 3px; background: #f8f8f8; box-shadow: 0 0 5px #cfd1d4; }
.fold svg { width: 20px; height: 20px; stroke: #666; }
.card { height: 48px; gap: 8px; border-radius: 5px; overflow: hidden; background: #fff; color: #111; box-shadow: 0 1px 5px #d4d6da; }
.badge { width: 47px; height: 48px; display: flex; align-items: center; justify-content: center; }
.badge svg { stroke: #fff; }
.violet { background: #8a88fa; }
.sky { background: #36a5ea; }
.scrollbar { position: relative; width: 21px; background: #e9eaee; }
.cap, .thumb { position: absolute; left: 1px; width: 19px; border-radius: 8px; background: #c7cad0; }
.top { top: 30px; height: 22px; }
.thumb { top: 391px; height: 55px; background: #d5d9dc; }
.down { top: 668px; height: 22px; }
.down::after { content: ""; position: absolute; left: 5px; top: 9px; width: 9px; height: 5px; background: #858aa0; clip-path: polygon(0 0, 100% 0, 50% 100%); }
.browse { position: absolute; left: 0; top: 694px; width: 20px; height: 66px; stroke: none; }
.meter { position: absolute; right: 0; top: 197px; width: 15px; height: 88px; padding: 9px 2px 0 6px; border-radius: 4px 0 0 4px; background: #464b5a; display: flex; flex-direction: column; gap: 1px; }
.meter i { height: 2px; flex: none; background: #2c2f40; }
.meter .warm { background: #b4b653; }
.meter .cool { background: #4fb287; }
.meter.small { right: 3px; top: 201px; width: 12px; height: 85px; padding: 69px 2px 0; border-radius: 4px; background: #5a5c5e; gap: 2px; }
.meter .green { background: #47a867; }
.pointer { position: absolute; right: 0; top: 527px; width: 5px; height: 18px; }

.status { position: relative; display: flex; align-items: center; height: 43px; flex: none; background: #f5f7fa; border-top: 1px solid #dcdee2; }
.cell { display: flex; align-items: center; height: 30px; padding: 0 9px 0 14px; gap: 5px; border-right: 1px solid #e3e5e9; }
.cell svg { width: 22px; height: 22px; }
button.cell { padding-right: 16px; }
.cell.noline { border: 0; }
.views { margin-left: auto; display: flex; align-items: center; padding-right: 65px; gap: 3px; }
.views button { width: 36px; height: 36px; justify-content: center; }
.views svg { width: 22px; height: 22px; }
.views .rule { margin: 0 8px; height: 22px; }
.views .on { background: #d8dde4; }
.views .percent { width: 66px; gap: 7px; }
.views .minus { position: relative; width: 16px; height: 16px; margin: 0 15px 0 13px; }
.minus::before, .plus::after { content: ""; position: absolute; left: 0; top: 6px; width: 15px; height: 3px; background: #3d424c; border-radius: 1px; }
.plus::after { left: 6px; top: 0; width: 3px; height: 15px; }
.views .plus { margin: 0 0 0 12px; }
input[type="range"] { appearance: none; width: 208px; height: 20px; margin: 0; background: linear-gradient(#555a63, #555a63) left center / 48% 1px no-repeat, linear-gradient(#c6c9ce, #c6c9ce) left center / 100% 1px no-repeat; }
input[type="range"]::-webkit-slider-thumb { appearance: none; width: 19px; height: 19px; border-radius: 50%; border: 2px solid #4a4f58; background: #f2f2f2; }
.mascot { position: absolute; right: 0; bottom: 0; width: 75px; height: 75px; z-index: 2; }

.taskbar { position: relative; display: flex; align-items: center; height: 60px; flex: none; background: linear-gradient(90deg, #28363e 0, #27333b 62%, #2a2a2a 74%, #222c33 84%, #1f2b32 100%); color: #fff; }
.app-btn { width: 61px; height: 60px; margin-right: 14px; justify-content: center; border-bottom: 3px solid transparent; border-top: 3px solid transparent; }
.app-btn svg { width: 34px; height: 34px; }
.win { margin-left: 5px; }
.win svg { width: 25px; height: 25px; }
.ie { margin-left: 7px; }
.open { border-bottom-color: #76b5e6; }
.app-btn.open + .open { margin-right: 8px; }
.app-btn.current { width: 73px; margin-right: 0; background: #505c64; border-top-color: #505c64; border-bottom-color: #76b5e6; }
.temp { position: relative; margin-left: auto; width: 74px; display: flex; flex-direction: column; align-items: center; line-height: 25px; }
.temp svg { position: absolute; left: 19px; top: 14px; width: 36px; height: 24px; }
.tray { display: flex; align-items: center; gap: 12px; margin-left: 6px; }
.ime { width: 24px; text-align: center; }
.qbadge { margin-left: 18px; }
.clock { width: 96px; margin: 0 27px 0 24px; display: flex; flex-direction: column; align-items: center; line-height: 24px; }
.edge { width: 2px; height: 60px; margin: 0 6px 0 19px; background: #6b7379; }
.dot { position: absolute; right: 70px; top: 3px; width: 6px; height: 6px; border-radius: 50%; background: #f00f18; }
.credit { position: absolute; right: 15px; bottom: 5px; font-family: "Noto Sans CJK SC", sans-serif; font-size: 20px; line-height: 30px; color: #c8cbcdcc; }
</style>
